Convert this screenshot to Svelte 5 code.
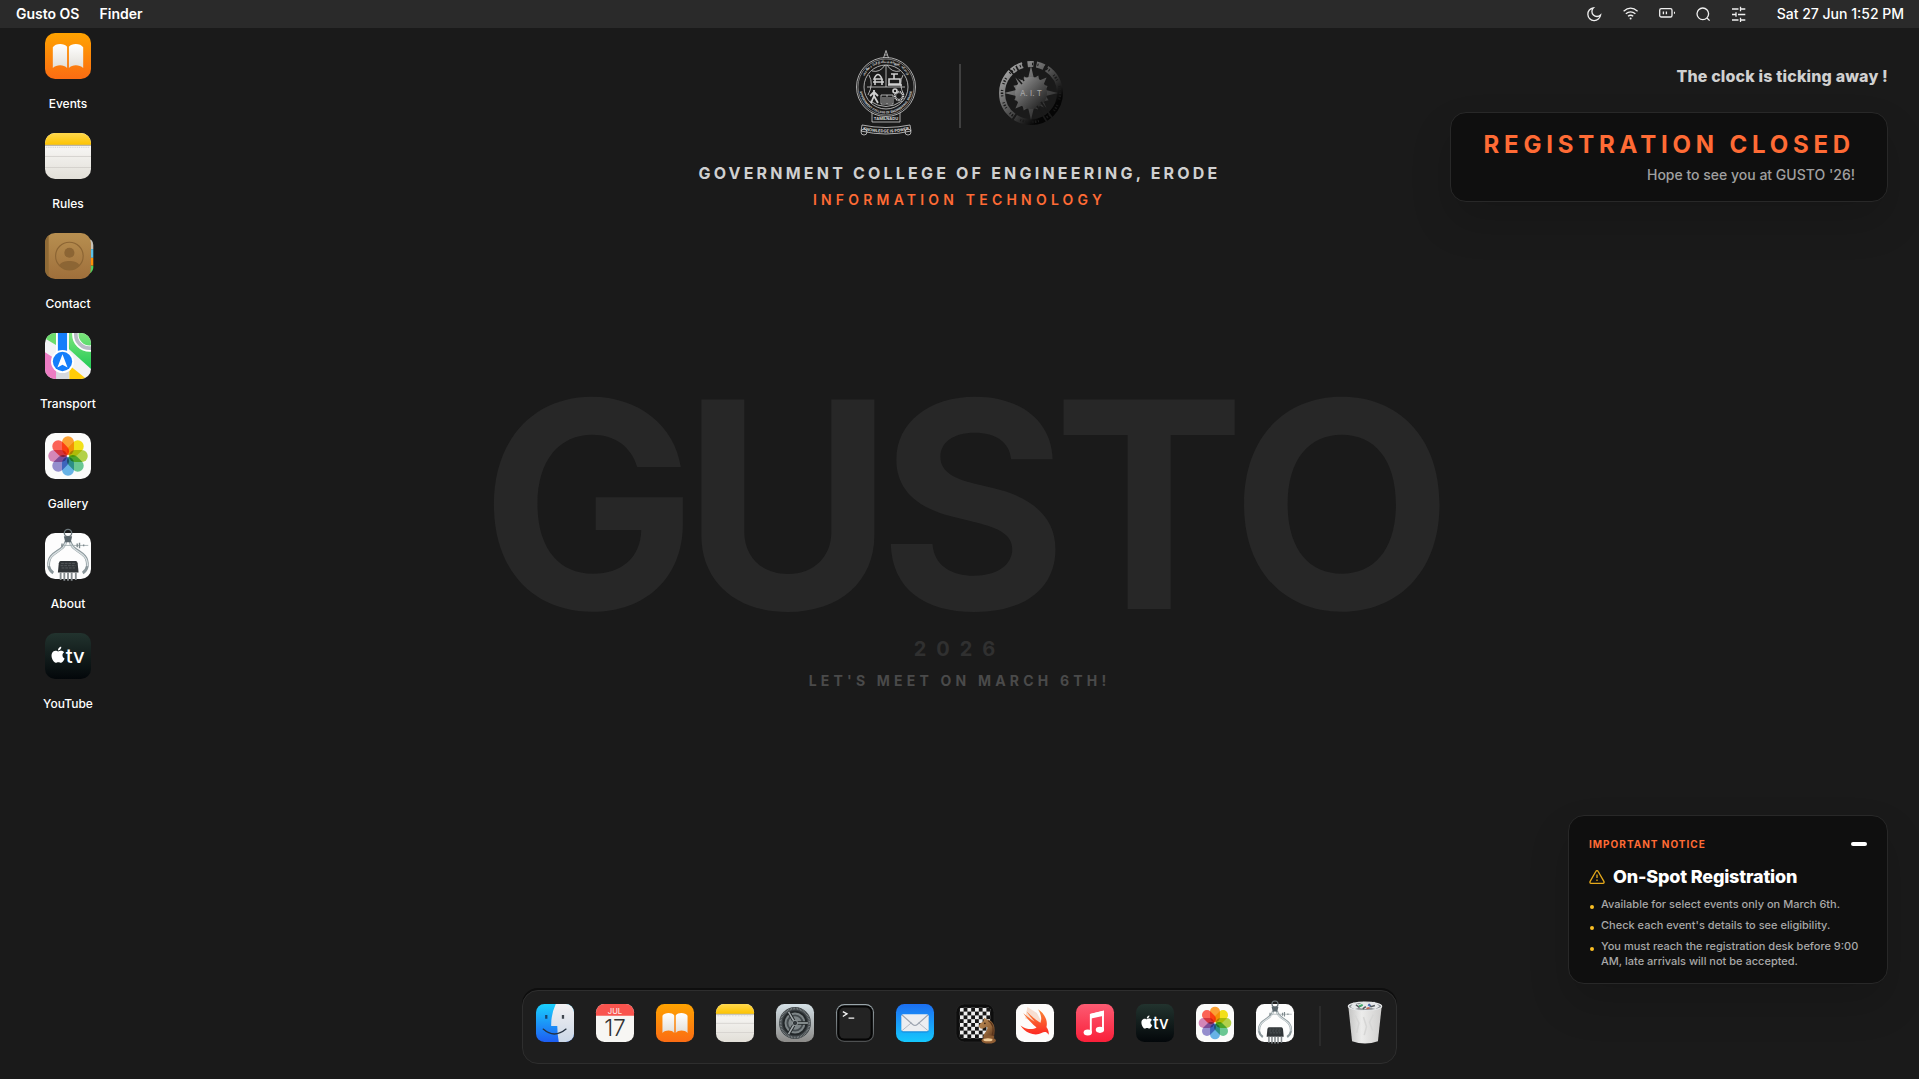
<script lang="ts">
	const desktop = [
		{ icon: 'books', label: 'Events' },
		{ icon: 'notes', label: 'Rules' },
		{ icon: 'contacts', label: 'Contact' },
		{ icon: 'maps', label: 'Transport' },
		{ icon: 'photos', label: 'Gallery' },
		{ icon: 'about', label: 'About' },
		{ icon: 'tv', label: 'YouTube' }
	];

	const dock = [
		{ icon: 'finder', label: 'Finder' },
		{ icon: 'calendar', label: 'Calendar' },
		{ icon: 'books', label: 'Events' },
		{ icon: 'notes', label: 'Rules' },
		{ icon: 'settings', label: 'Settings' },
		{ icon: 'terminal', label: 'Terminal' },
		{ icon: 'mail', label: 'Mail' },
		{ icon: 'chess', label: 'Chess' },
		{ icon: 'swift', label: 'Swift' },
		{ icon: 'music', label: 'Music' },
		{ icon: 'tv', label: 'YouTube' },
		{ icon: 'photos', label: 'Gallery' },
		{ icon: 'about', label: 'About' }
	];

	const notices = [
		'Available for select events only on March 6th.',
		"Check each event's details to see eligibility.",
		'You must reach the registration desk before 9:00 AM, late arrivals will not be accepted.'
	];

	const petals = ['#ff9a1f', '#f5e100', '#aed136', '#5cc48a', '#58aee9', '#8c84cc', '#d47bb4', '#ff5347'];

	const range = (n) => Array.from({ length: n }, (_, i) => i);

	// sunburst around the department logo
	const burst = range(32)
		.map((i) => {
			const r = i % 2 ? 15 : [27, 19, 22, 18][(i / 2) % 4];
			const a = (i * Math.PI) / 16 - Math.PI / 2;
			return `${(32 + r * Math.cos(a)).toFixed(1)},${(32 + r * Math.sin(a)).toFixed(1)}`;
		})
		.join(' ');

	let open = $state(true);
</script>

{#snippet appIcon(name)}
	<svg class="app-icon" viewBox="0 0 100 100" aria-hidden="true">
		{#if name === 'books'}
			<rect width="100" height="100" rx="22" fill="url(#g-orange)" />
			<path d="M17 31C22 22 42 21 48 30V76C41 68 25 68 17 76Z" fill="url(#g-paper)" />
			<path d="M52 30C58 21 78 22 83 31V76C75 68 59 68 52 76Z" fill="url(#g-paper)" />
		{:else if name === 'notes'}
			<rect width="100" height="100" rx="22" fill="url(#g-paper)" />
			<path d="M0 26V22A22 22 0 0 1 22 0H78A22 22 0 0 1 100 22V26Z" fill="url(#g-yellow)" />
			<path d="M0 27H100" stroke="#b9b5aa" stroke-width="3" />
			<path d="M2 31H98" stroke="#c9c9c6" stroke-width="2" stroke-dasharray="2 2" />
			<path d="M0 51H100M0 75H100" stroke="#d2d0cb" stroke-width="2" />
		{:else if name === 'contacts'}
			<path d="M90 10Q105 14 105 26V35H90Z" fill="#c5c1b8" />
			<path d="M90 35H105V54H90Z" fill="#5ac1ea" />
			<path d="M90 54H105V71H90Z" fill="#ff8f0a" />
			<path d="M90 71H105V76Q104 86 90 92Z" fill="#53cf5c" />
			<rect width="100" height="100" rx="22" fill="url(#g-brown)" />
			<path d="M8 5V95A22 22 0 0 1 0 78V22A22 22 0 0 1 8 5Z" fill="#8f6a36" />
			<circle cx="53" cy="50" r="30" fill="none" stroke="#8c6534" stroke-width="2.5" />
			<circle cx="53" cy="43" r="11" fill="#8c6534" />
			<path d="M31 70C38 58 68 58 75 70C64 84 42 84 31 70Z" fill="#8c6534" />
		{:else if name === 'maps'}
			<g clip-path="url(#squircle)">
				<rect width="100" height="100" fill="#f2f2f5" />
				<path d="M50 0H100V78L50 33Z" fill="url(#g-green)" />
				<path d="M0 0H24V26L0 12Z" fill="#6bdc6c" />
				<path d="M0 42L28 60V100H0Z" fill="#ec7cc3" />
				<path d="M24 78H52V100H24Z" fill="#d5d8de" />
				<path d="M53 70L90 100H53Z" fill="#ffcc08" />
				<circle cx="97" cy="3" r="31" fill="none" stroke="#fff" stroke-width="14" />
				<circle cx="97" cy="3" r="30" fill="none" stroke="#b9bcc6" stroke-width="8" />
				<path d="M24 0H52V60H24Z" fill="#fff" />
				<path d="M28 0H48V60H28Z" fill="#147efb" />
				<circle cx="38" cy="62" r="25" fill="#fff" />
				<circle cx="38" cy="62" r="21" fill="#147efb" />
				<path d="M38 46L49 75L38 69L27 75Z" fill="#fff" />
			</g>
		{:else if name === 'photos'}
			<rect width="100" height="100" rx="22" fill="#fbfbfa" />
			{#each petals as fill, i}
				<rect class="petal" x="37" y="7" width="26" height="41" rx="13" {fill} transform="rotate({i * 45} 50 50)" />
			{/each}
		{:else if name === 'about'}
			<rect width="100" height="100" rx="22" fill="#fdfdfd" />
			<circle cx="50" cy="0" r="8" fill="none" stroke="#6c777b" stroke-width="3" />
			<path d="M45 18C43 42 5 38 8 72Q10 82 18 87" fill="none" stroke="#8b979b" stroke-width="6" />
			<path d="M55 18C57 42 95 38 92 72Q90 82 82 87" fill="none" stroke="#8b979b" stroke-width="6" />
			<path d="M45 20C43 42 5 40 8 72M55 20C57 42 95 40 92 72" fill="none" stroke="#d8dfe1" stroke-width="3" />
			<path d="M41 7H59L56 20H44Z" fill="#59656b" />
			<path d="M35 27H94" stroke="#a5afb2" stroke-width="2" />
			<path d="M37 23V31M70 23V31M75 21V33M84 25V29" stroke="#7d888c" stroke-width="3" />
			<path d="M34 61H67Q70 61 71 66L73 86H28L30 66Q31 61 34 61Z" fill="#303437" />
			<path d="M35 66H66M34 71H67M36 76H65" stroke="#565b5e" stroke-width="2" stroke-dasharray="6 2" />
			<path d="M34 86V102M42 86V104M50 86V104M58 86V104M67 86V102" stroke="#858b8e" stroke-width="4" />
		{:else if name === 'tv'}
			<rect width="100" height="100" rx="22" fill="url(#g-tv)" />
			<g transform="translate(11 30) scale(1.45)">
				<path
					d="M12.152 6.896c-.948 0-2.415-1.078-3.96-1.04-2.04.027-3.91 1.183-4.961 3.014-2.117 3.675-.546 9.103 1.519 12.09 1.013 1.454 2.208 3.09 3.792 3.039 1.52-.065 2.09-.987 3.935-.987 1.831 0 2.35.987 3.96.948 1.637-.026 2.676-1.48 3.676-2.948 1.156-1.688 1.636-3.325 1.662-3.415-.039-.013-3.182-1.221-3.22-4.857-.026-3.04 2.48-4.494 2.597-4.559-1.429-2.09-3.623-2.324-4.39-2.376-2-.156-3.675 1.09-4.61 1.09zM15.53 3.83c.843-1.012 1.4-2.427 1.245-3.83-1.207.052-2.662.805-3.532 1.818-.78.896-1.454 2.338-1.273 3.714 1.338.104 2.715-.688 3.559-1.701"
					fill="#fff"
				/>
			</g>
			<text x="45" y="65" font-size="44" font-weight="500" fill="#fff">tv</text>
		{:else if name === 'finder'}
			<g clip-path="url(#squircle)">
				<rect width="100" height="100" fill="url(#g-finder)" />
				<path d="M52 0H100V100H60Q56 80 56 58H40Q39 28 52 0Z" fill="url(#g-face)" />
				<path d="M27 29V39" stroke="#14456f" stroke-width="6" />
				<path d="M71 29V39" stroke="#40474f" stroke-width="6" />
				<path d="M19 66Q48 92 79 66" fill="none" stroke="#263240" stroke-width="3.5" stroke-linecap="round" />
			</g>
		{:else if name === 'calendar'}
			<rect width="100" height="100" rx="22" fill="#f7f6f3" />
			<path d="M0 31V22A22 22 0 0 1 22 0H78A22 22 0 0 1 100 22V31Z" fill="#f9544e" />
			<text x="50" y="25" font-size="20" font-weight="500" fill="#fde3e1" text-anchor="middle">JUL</text>
			<text x="50" y="84" font-size="60" font-weight="300" fill="#333" text-anchor="middle">17</text>
		{:else if name === 'settings'}
			<rect width="100" height="100" rx="22" fill="url(#g-metal)" />
			<circle cx="50" cy="50" r="42" fill="#3b4144" />
			<circle cx="50" cy="50" r="38" fill="none" stroke="#858c8e" stroke-width="5" stroke-dasharray="2 2" />
			<circle cx="50" cy="50" r="30" fill="#7d8587" stroke="#23282a" stroke-width="5" />
			<circle cx="50" cy="50" r="20" fill="none" stroke="#434a4d" stroke-width="5" />
			<path d="M50 50H82M50 50L34 22M50 50L34 78" stroke="#23282a" stroke-width="9" />
			<path d="M50 50H84M50 50L33 21M50 50L33 79" stroke="#a3aaac" stroke-width="4" />
			<circle cx="50" cy="50" r="7" fill="#33393c" stroke="#a3aaac" stroke-width="2" />
		{:else if name === 'terminal'}
			<rect width="100" height="100" rx="22" fill="url(#g-rim)" />
			<rect x="3" y="3" width="94" height="94" rx="19" fill="#050505" />
			<rect x="9" y="9" width="82" height="82" rx="13" fill="#232323" />
			<path d="M18 20L29 26L18 33M33 37H48" fill="none" stroke="#f4f4f4" stroke-width="3.5" />
		{:else if name === 'mail'}
			<rect width="100" height="100" rx="22" fill="url(#g-mail)" />
			<rect x="14" y="29" width="72" height="46" rx="5" fill="#1469bd" opacity="0.5" />
			<rect x="14" y="27" width="72" height="45" rx="5" fill="#eceef1" />
			<path d="M16 70L41 49M84 70L59 49" stroke="#b2b8c2" stroke-width="2.5" />
			<path d="M16 29L44 54Q50 59 56 54L84 29" fill="none" stroke="#9ca4b0" stroke-width="3" />
		{:else if name === 'chess'}
			<rect width="100" height="100" rx="22" fill="#0d0d0d" stroke="#262626" stroke-width="2" />
			<rect x="10" y="10" width="80" height="80" rx="4" fill="url(#board)" />
			<path d="M72 86C73 74 85 72 82 59L70 65Q64 66 60 60Q62 50 72 46L74 36L81 41C98 42 106 62 100 86Z" fill="url(#g-knight)" />
			<path d="M85 44C97 50 100 66 95 84" fill="none" stroke="#5a351b" stroke-width="3" />
			<circle cx="76" cy="51" r="2" fill="#2c180b" />
			<ellipse cx="86" cy="87" rx="15" ry="5" fill="#8a5a31" />
			<ellipse cx="86" cy="96" rx="19" ry="8" fill="#8f5d33" />
			<ellipse cx="84" cy="94" rx="12" ry="4" fill="#f0cc98" />
		{:else if name === 'swift'}
			<rect width="100" height="100" rx="22" fill="#fdfcfb" />
			<path d="M30 8L55 24L72 55L24 38Z" fill="#f7ded1" />
			<g transform="translate(2 0) scale(4.1)">
				<path
					d="M13.543 3.41c4.114 2.47 6.545 7.162 5.549 11.131-.024.093-.05.181-.076.272l.002.001c2.062 2.538 1.5 5.258 1.236 4.745-1.072-2.086-3.066-1.568-4.088-1.043a6.803 6.803 0 0 1-.281.158l-.02.012-.002.002c-2.115 1.123-4.957 1.205-7.812-.022a12.568 12.568 0 0 1-5.64-4.838c.649.48 1.35.902 2.097 1.252 3.019 1.414 6.051 1.311 8.197-.002C9.651 12.73 7.101 9.67 5.146 7.191a10.628 10.628 0 0 1-1.005-1.384c2.34 2.142 6.038 4.83 7.365 5.576C8.69 8.408 6.208 4.743 6.324 4.86c4.436 4.466 8.527 6.996 8.527 6.996.154.085.27.154.36.213.085-.215.16-.437.224-.668.708-2.588-.09-5.548-1.893-7.992z"
					fill="url(#g-swift)"
				/>
			</g>
		{:else if name === 'music'}
			<rect width="100" height="100" rx="22" fill="url(#g-music)" />
			<path d="M39 74V28L71 20V67" fill="none" stroke="#fff" stroke-width="5" />
			<path d="M37 26L73 18V31L37 39Z" fill="#fff" />
			<ellipse cx="31" cy="75" rx="11" ry="8" fill="#fff" />
			<ellipse cx="63" cy="68" rx="11" ry="8" fill="#fff" />
		{:else if name === 'trash'}
			<path d="M6 5L16 98Q50 110 84 98L94 5Z" fill="url(#g-bin)" />
			<ellipse cx="50" cy="6" rx="44" ry="11" fill="#8e9396" stroke="#e8e9ea" stroke-width="3" />
			<path d="M12 8L20 -4L34 1L46 -6L60 -2L74 -6L88 6L78 13L62 9L50 14L34 10L22 14Z" fill="#e6e8e9" />
			<path d="M26 2L34 8L42 3M60 0L66 7L76 4M44 13L52 7" fill="none" stroke="#51575b" stroke-width="4" />
			<path d="M34 6L44 2" stroke="#3fae6d" stroke-width="5" />
			<path d="M58 2L64 5" stroke="#4c72c4" stroke-width="5" />
			<path d="M54 12L62 10" stroke="#c9604c" stroke-width="4" />
			<path d="M24 30L34 50L28 76M72 28L62 48L70 70M46 34L54 60L48 82" fill="none" stroke="#d6d6d5" stroke-width="4" />
		{/if}
	</svg>
{/snippet}

<svg class="defs" aria-hidden="true">
	<defs>
		<clipPath id="squircle"><rect width="100" height="100" rx="22" /></clipPath>
		<linearGradient id="g-orange" x2="0" y2="1"><stop stop-color="#ffa300" /><stop offset="1" stop-color="#fb6c13" /></linearGradient>
		<linearGradient id="g-paper" x2="0" y2="1"><stop stop-color="#fff" /><stop offset="1" stop-color="#e2dfd8" /></linearGradient>
		<linearGradient id="g-yellow" x2="0" y2="1"><stop stop-color="#ffd84d" /><stop offset="1" stop-color="#fdc300" /></linearGradient>
		<linearGradient id="g-brown" x2="0" y2="1"><stop stop-color="#b78f50" /><stop offset="1" stop-color="#9f6f3b" /></linearGradient>
		<linearGradient id="g-green" x2="0" y2="1"><stop stop-color="#7be57a" /><stop offset="1" stop-color="#21c955" /></linearGradient>
		<linearGradient id="g-tv" x2="0" y2="1"><stop stop-color="#22332e" /><stop offset="1" stop-color="#03070a" /></linearGradient>
		<linearGradient id="g-finder" x2="0" y2="1"><stop stop-color="#1ad0fd" /><stop offset="1" stop-color="#1d5df2" /></linearGradient>
		<linearGradient id="g-face" x2="0" y2="1"><stop stop-color="#f3f1f3" /><stop offset="1" stop-color="#cbd7e6" /></linearGradient>
		<linearGradient id="g-metal" x2="0" y2="1"><stop stop-color="#d5e1e7" /><stop offset="1" stop-color="#8b8a88" /></linearGradient>
		<linearGradient id="g-rim" x2="0" y2="1"><stop stop-color="#9aa6ab" /><stop offset="1" stop-color="#4d4f50" /></linearGradient>
		<linearGradient id="g-mail" x2="0" y2="1"><stop stop-color="#1c6ff2" /><stop offset="1" stop-color="#15c8fd" /></linearGradient>
		<linearGradient id="g-knight" x2="1" y2="1"><stop stop-color="#bd8c55" /><stop offset="0.6" stop-color="#9a6a3c" /><stop offset="1" stop-color="#54301a" /></linearGradient>
		<linearGradient id="g-swift" x2="0" y2="1"><stop stop-color="#f98a36" /><stop offset="1" stop-color="#fd2822" /></linearGradient>
		<linearGradient id="g-music" x2="0" y2="1"><stop stop-color="#fc5b72" /><stop offset="1" stop-color="#fa1f39" /></linearGradient>
		<linearGradient id="g-bin"><stop stop-color="#c4c4c3" /><stop offset="0.4" stop-color="#ececeb" /><stop offset="1" stop-color="#cfcecd" /></linearGradient>
		<linearGradient id="g-dept" x2="1" y2="1"><stop stop-color="#b5b5b5" /><stop offset="0.5" stop-color="#4c4c4c" /><stop offset="0.8" stop-color="#050505" /></linearGradient>
		<linearGradient id="g-sun" x2="1" y2="1"><stop stop-color="#a0a0a0" /><stop offset="0.55" stop-color="#505050" /><stop offset="1" stop-color="#151515" /></linearGradient>
		<pattern id="board" width="20" height="20" patternUnits="userSpaceOnUse" x="10" y="10">
			<rect width="20" height="20" fill="#151515" />
			<path d="M0 0H10V10H0ZM10 10H20V20H10Z" fill="#eee" />
		</pattern>
	</defs>
</svg>

<main class="os">
	<nav class="menubar">
		<div class="menus">
			<button>Gusto OS</button>
			<button>Finder</button>
		</div>
		<div class="status">
			<button aria-label="Dark mode">
				<svg viewBox="0 0 16 16"><path d="M6.4 1.8A5 5 0 0 0 13.6 9 6.4 6.4 0 1 1 6.4 1.8Z" /></svg>
			</button>
			<button aria-label="Wi-Fi">
				<svg viewBox="0 0 16 16">
					<path d="M.6 5.2Q7.6-.8 14.6 5.2M2.8 7.8Q7.6 3.8 12.4 7.8M5 10.3Q7.6 8.2 10.2 10.3" />
					<circle class="solid" cx="7.6" cy="12.4" r="1" />
				</svg>
			</button>
			<button aria-label="Battery">
				<svg viewBox="0 0 16 16">
					<rect x="0.7" y="2.6" width="12.3" height="8.4" rx="1.6" />
					<path d="M4.4 5.4V8.2M7.4 5.4V8.2M15.6 5.8V7.8" />
				</svg>
			</button>
			<button aria-label="Search">
				<svg viewBox="0 0 16 16"><circle cx="7.8" cy="7.8" r="5.8" /><path d="M12 12L14.6 14.6" /></svg>
			</button>
			<button aria-label="Control center">
				<svg viewBox="0 0 16 16">
					<path d="M1 3H7.5M9.5 .8V5.2M9.5 3H14.3M1 8.5H5V6.3V10.7M7 8.5H14.3M1 14H7.5M9.5 11.8V16M9.5 14H14.3" />
				</svg>
			</button>
			<time>Sat 27 Jun 1:52 PM</time>
		</div>
	</nav>

	<section class="wallpaper">
		<div class="gusto">GUSTO</div>
		<div class="year">2026</div>
		<div class="meet">LET'S MEET ON MARCH 6TH!</div>
	</section>

	<aside class="shortcuts">
		{#each desktop as app}
			<button class="shortcut">
				{@render appIcon(app.icon)}
				<span>{app.label}</span>
			</button>
		{/each}
	</aside>

	<header class="college">
		<div class="logos">
			<svg class="emblem" viewBox="0 0 60 86" role="img" aria-label="College emblem">
				<defs>
					<path id="arc-top" d="M5.5 37A24.5 24.5 0 0 1 54.5 37" />
					<path id="arc-bottom" d="M3.5 37A26.5 26.5 0 0 0 56.5 37" />
					<path id="arc-motto" d="M8 80Q30 85 52 80" />
				</defs>
				<g fill="none" stroke="#d0d0d0" stroke-width="0.8">
					<path d="M27.5 8L30 0.5L32.5 8M28.5 5H31.5" />
					<circle cx="30" cy="37" r="29.5" />
					<circle cx="30" cy="37" r="28" stroke-width="0.5" />
					<circle cx="30" cy="37" r="22" />
					<path d="M30 15V37M11 37H49M16 21Q24 23 29 15M44 21Q36 23 31 15M13 25Q18 34 12 45M47 25Q42 34 48 45M14 51Q30 62 46 51" />
					<path d="M16 63V72H44V63" />
					<path d="M6 75Q30 80 54 75L55 81Q30 87 5 81Z" />
					<circle cx="8" cy="82" r="3" />
					<circle cx="52" cy="82" r="3" />
					<path d="M18 29Q22 20 26 29ZM17 32H28M19 29V35M26 29V35" stroke-width="1.6" />
					<path d="M35 24H42M38 24V29M33 29H44V34H33ZM32 35H46" stroke-width="1.6" />
					<path d="M18 40V47M18 42L14 46M18 42L22 46M18 46L15 53M18 46L22 53" stroke-width="1.8" />
					<path d="M25 45H37V54H25ZM31 45V54M27 47V53M29 47V53M33 47V53M35 47V53" />
					<circle cx="43" cy="46" r="4" stroke-width="2.4" stroke-dasharray="1 0.6" />
					<circle cx="39" cy="41" r="2" stroke-width="1.6" />
				</g>
				<g fill="#d8d8d8" font-weight="700" text-anchor="middle">
					<text font-size="3"><textPath href="#arc-top" startOffset="50%">அரசினர் பொறியியல் கல்லூரி, ஈரோடு</textPath></text>
					<text font-size="3"><textPath href="#arc-bottom" startOffset="50%">GOVERNMENT COLLEGE OF ENGINEERING, ERODE</textPath></text>
					<text x="30" y="70" font-size="4">TAMILNADU</text>
					<text font-size="4"><textPath href="#arc-motto" startOffset="50%">KNOWLEDGE IS POWER</textPath></text>
				</g>
			</svg>
			<div class="rule"></div>
			<svg class="dept" viewBox="0 0 64 64" role="img" aria-label="Department logo">
				<circle cx="32" cy="32" r="29" fill="none" stroke="url(#g-dept)" stroke-width="6" stroke-dasharray="62 2 64 5 6 3 8 3" />
				<circle cx="32" cy="32" r="29" fill="none" stroke="#1a1a1a" stroke-width="2.5" stroke-dasharray="1 1.5 1.5 1.5 1 6" />
				<polygon points={burst} fill="url(#g-sun)" />
				<circle cx="32" cy="32" r="16" fill="url(#g-sun)" />
				<path d="M10 8L23 23M17 5L25 20M42 41L54 58M38 45L48 61" stroke="#1a1a1a" stroke-width="1.6" />
				<text x="32" y="35" font-size="8" fill="#a8a8a8" text-anchor="middle">A. I. T</text>
			</svg>
		</div>
		<h1>GOVERNMENT COLLEGE OF ENGINEERING, ERODE</h1>
		<h2>INFORMATION TECHNOLOGY</h2>
	</header>

	<section class="countdown">
		<p class="ticking">The clock is ticking away !</p>
		<div class="closed">
			<strong>REGISTRATION CLOSED</strong>
			<p>Hope to see you at GUSTO '26!</p>
		</div>
	</section>

	<section class="notice">
		<div class="notice-top">
			<span>IMPORTANT NOTICE</span>
			<button aria-label="Minimize notice" onclick={() => (open = !open)}></button>
		</div>
		{#if open}
			<h3>
				<svg viewBox="0 0 16 16" aria-hidden="true">
					<path d="M8 1.7Q8.8 1.7 9.2 2.5L15 12.6Q15.4 14.2 14 14.3H2Q.6 14.2 1 12.6L6.8 2.5Q7.2 1.7 8 1.7ZM8 5.6V9M8 10.6V12" />
				</svg>
				On-Spot Registration
			</h3>
			<ul>
				{#each notices as notice}
					<li>{notice}</li>
				{/each}
			</ul>
		{/if}
	</section>

	<footer class="dock">
		{#each dock as app}
			<button aria-label={app.label}>{@render appIcon(app.icon)}</button>
		{/each}
		<div class="divider"></div>
		<button aria-label="Trash">{@render appIcon('trash')}</button>
	</footer>
</main>

<style>
	:global(body) {
		margin: 0;
		background: #1a1a1a;
	}

	.defs {
		position: absolute;
		width: 0;
		height: 0;
	}

	.os {
		display: grid;
		grid-template: 28px 1fr / 1fr;
		min-height: 100vh;
		background: #1a1a1a;
		color: #fff;
		font-family: Inter, 'Noto Sans', sans-serif;
	}

	button {
		padding: 0;
		border: none;
		background: none;
		color: inherit;
		font: inherit;
		cursor: pointer;
	}

	p,
	h1,
	h2,
	h3,
	ul {
		margin: 0;
		padding: 0;
	}

	.app-icon {
		display: block;
		width: 46px;
		height: 46px;
		overflow: visible;
		isolation: isolate;
	}

	.petal {
		mix-blend-mode: multiply;
		opacity: 0.9;
	}

	.menubar {
		grid-area: 1 / 1;
		display: flex;
		justify-content: space-between;
		align-items: center;
		padding: 0 15px 0 16px;
		background: #2a2a2a;
		font-size: 14px;
		line-height: 20px;
	}

	.menus {
		display: flex;
		gap: 20px;
		font-weight: 600;
	}

	.status {
		display: flex;
		align-items: center;
		gap: 20px;
		font-weight: 500;
	}

	.status svg {
		display: block;
		width: 16px;
		height: 16px;
		fill: none;
		stroke: #f0f0f0;
		stroke-width: 1.3;
	}

	.status .solid {
		fill: #f0f0f0;
		stroke: none;
	}

	.status time {
		margin-left: 10px;
	}

	.wallpaper {
		grid-area: 1 / 1 / 3 / 2;
		place-self: center;
		text-align: center;
		font-weight: 700;
		user-select: none;
	}

	.gusto {
		color: #272727;
		font-size: 288px;
		line-height: 230px;
		letter-spacing: -0.05em;
		font-kerning: none;
	}

	.year {
		margin-top: 16px;
		color: #303030;
		font-size: 20px;
		line-height: 28px;
		letter-spacing: 0.5em;
	}

	.meet {
		margin-top: 8px;
		color: #4a4a4a;
		font-size: 14px;
		line-height: 20px;
		letter-spacing: 0.3em;
	}

	.shortcuts {
		grid-area: 2 / 1;
		place-self: start;
		display: grid;
		gap: 20px;
		padding: 5px 20px;
	}

	.shortcut {
		display: flex;
		flex-direction: column;
		align-items: center;
		gap: 16px;
		width: 96px;
		font-size: 12px;
		font-weight: 500;
		line-height: 18px;
	}

	.college {
		grid-area: 2 / 1;
		place-self: start center;
		padding-top: 22px;
		text-align: center;
	}

	.logos {
		display: grid;
		grid-template-columns: 1fr 2px 1fr;
		align-items: center;
		margin-bottom: 25px;
		padding-left: 2px;
	}

	.emblem {
		justify-self: end;
		width: 60px;
		height: 86px;
		margin-right: 43px;
	}

	.rule {
		height: 64px;
		margin-top: 6px;
		background: #404040;
	}

	.dept {
		width: 64px;
		height: 64px;
		margin-left: 38px;
	}

	.college h1 {
		color: #d0d0d0;
		font-size: 16px;
		line-height: 24px;
		letter-spacing: 0.2em;
	}

	.college h2 {
		margin-top: 5px;
		color: #ff6b35;
		font-size: 14px;
		font-weight: 600;
		line-height: 20px;
		letter-spacing: 0.3em;
	}

	.countdown {
		grid-area: 2 / 1;
		place-self: start end;
		display: flex;
		flex-direction: column;
		align-items: flex-end;
		gap: 24px;
		padding: 36px 31px 0 0;
	}

	.ticking {
		color: #d0d0d0;
		font-size: 16px;
		font-weight: 800;
		line-height: 24px;
		letter-spacing: 0.01em;
	}

	.closed {
		display: flex;
		flex-direction: column;
		align-items: flex-end;
		gap: 4px;
		padding: 16px 32px;
		border: 1px solid #282828;
		border-radius: 16px;
		background: #0f0f0f;
		box-shadow: 0 20px 40px rgba(0, 0, 0, 0.15);
	}

	.closed strong {
		color: #ff6b35;
		font-size: 24px;
		line-height: 32px;
		letter-spacing: 0.2em;
	}

	.closed p {
		color: #a0a0a0;
		font-size: 14px;
		font-weight: 500;
		line-height: 20px;
	}

	.notice {
		grid-area: 2 / 1;
		place-self: end;
		box-sizing: border-box;
		width: 320px;
		margin: 0 31px 95px 0;
		padding: 20px;
		padding-bottom: 14px;
		border: 1px solid #282828;
		border-radius: 16px;
		background: #0f0f0f;
		box-shadow: 0 20px 40px rgba(0, 0, 0, 0.15);
	}

	.notice-top {
		display: flex;
		justify-content: space-between;
		align-items: center;
		color: #ff6b35;
		font-size: 10px;
		font-weight: 700;
		line-height: 16px;
		letter-spacing: 0.1em;
	}

	.notice-top button {
		width: 16px;
		height: 4px;
		border-radius: 2px;
		background: #fff;
	}

	.notice h3 {
		display: flex;
		align-items: center;
		gap: 8px;
		margin: 11px 0 6px;
		font-size: 18px;
		font-weight: 800;
		line-height: 28px;
		letter-spacing: -0.01em;
	}

	.notice h3 svg {
		width: 16px;
		height: 16px;
		fill: none;
		stroke: #e5a91b;
		stroke-width: 1.3;
	}

	.notice ul {
		display: grid;
		gap: 6px;
		color: #a8a8a8;
		font-size: 11px;
		font-weight: 500;
		line-height: 15px;
		list-style: none;
	}

	.notice li {
		display: flex;
		gap: 7px;
	}

	.notice li::before {
		content: '';
		flex: none;
		width: 4px;
		height: 4px;
		margin: 8px 0 0 1px;
		border-radius: 50%;
		background: #fbbf24;
	}

	.dock {
		grid-area: 2 / 1;
		place-self: end center;
		display: flex;
		gap: 22px;
		margin-bottom: 15px;
		padding: 13px 12px 21px 13px;
		border: 1px solid #2e2e2e;
		border-radius: 16px;
		background: #1e1e1e;
		box-shadow: 0 -2px 0 #0e0e0e;
	}

	.dock .app-icon {
		width: 38px;
		height: 38px;
	}

	.divider {
		width: 2px;
		height: 40px;
		margin: 2px 3px -4px;
		background: #2b2b2b;
	}
</style>
